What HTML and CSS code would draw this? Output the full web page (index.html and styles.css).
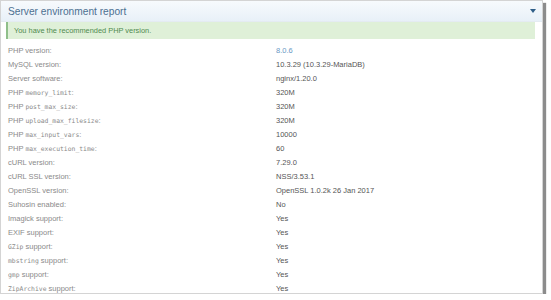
FILE: index.html
```html
<!DOCTYPE html>
<html lang="en">
<head>
  <meta charset="UTF-8">
  <title>Server environment report</title>
  <link rel="stylesheet" href="styles.css">
</head>
<body>

<div class="panel">
  <div class="panel-head">
    <span class="panel-title">Server environment report</span>
    <span class="toggle"></span>
  </div>

  <div class="alert">You have the recommended PHP version.</div>

  <table class="report">
    <tr><td class="label">PHP version:</td><td class="value ok">8.0.6</td></tr>
    <tr><td class="label">MySQL version:</td><td class="value">10.3.29 (10.3.29-MariaDB)</td></tr>
    <tr><td class="label">Server software:</td><td class="value">nginx/1.20.0</td></tr>
    <tr><td class="label">PHP <code>memory_limit</code>:</td><td class="value">320M</td></tr>
    <tr><td class="label">PHP <code>post_max_size</code>:</td><td class="value">320M</td></tr>
    <tr><td class="label">PHP <code>upload_max_filesize</code>:</td><td class="value">320M</td></tr>
    <tr><td class="label">PHP <code>max_input_vars</code>:</td><td class="value">10000</td></tr>
    <tr><td class="label">PHP <code>max_execution_time</code>:</td><td class="value">60</td></tr>
    <tr><td class="label">cURL version:</td><td class="value">7.29.0</td></tr>
    <tr><td class="label">cURL SSL version:</td><td class="value">NSS/3.53.1</td></tr>
    <tr><td class="label">OpenSSL version:</td><td class="value">OpenSSL 1.0.2k 26 Jan 2017</td></tr>
    <tr><td class="label">Suhosin enabled:</td><td class="value">No</td></tr>
    <tr><td class="label">Imagick support:</td><td class="value">Yes</td></tr>
    <tr><td class="label">EXIF support:</td><td class="value">Yes</td></tr>
    <tr><td class="label"><code>GZip</code> support:</td><td class="value">Yes</td></tr>
    <tr><td class="label"><code>mbstring</code> support:</td><td class="value">Yes</td></tr>
    <tr><td class="label"><code>gmp</code> support:</td><td class="value">Yes</td></tr>
    <tr><td class="label"><code>ZipArchive</code> support:</td><td class="value">Yes</td></tr>
  </table>
</div>

</body>
</html>
```

FILE: styles.css
```css
body {
  font-family: "Liberation Sans", Arial, sans-serif;
  background-color: #ffffff;
  margin: 0;
  padding: 0;
}
.panel {
  width: 541px;
  height: 292px;
  border: 1px solid #d4d4d4;
  background: white;
  box-shadow: 3px 3px 1px #8c8c8c;
  overflow: hidden;
}
.panel-head {
  height: 20px;
  display: flex;
  align-items: center;
  justify-content: space-between;
  padding: 0 6px 0 7px;
  background: linear-gradient(#f7fafd, #e8f0f8);
  border-bottom: 1px solid #e4ebf2;
}
.panel-title {
  font-size: 10.2px;
  color: #4d7091;
}
.toggle {
  width: 0;
  height: 0;
  border-left: 3px solid transparent;
  border-right: 3px solid transparent;
  border-top: 4px solid #2f5e88;
}
.alert {
  margin: 0 7px 0 5px;
  height: 17px;
  line-height: 17px;
  padding-left: 6px;
  font-size: 7.4px;
  color: #4f8a4f;
  background-color: #dff0d8;
  border-left: 2px solid #8fbf8a;
}
.report {
  border-collapse: collapse;
  margin-top: 4px;
  font-size: 7.5px;
}
.report td {
  height: 14px;
  padding: 0;
  white-space: nowrap;
}
.label {
  width: 268px;
  padding-left: 7px !important;
  color: #8a8a8a;
}
.value {
  color: #555555;
}
.ok {
  color: #6a98c4;
}
code {
  font-family: "DejaVu Sans Mono", monospace;
  font-size: 6.4px;
}
```
